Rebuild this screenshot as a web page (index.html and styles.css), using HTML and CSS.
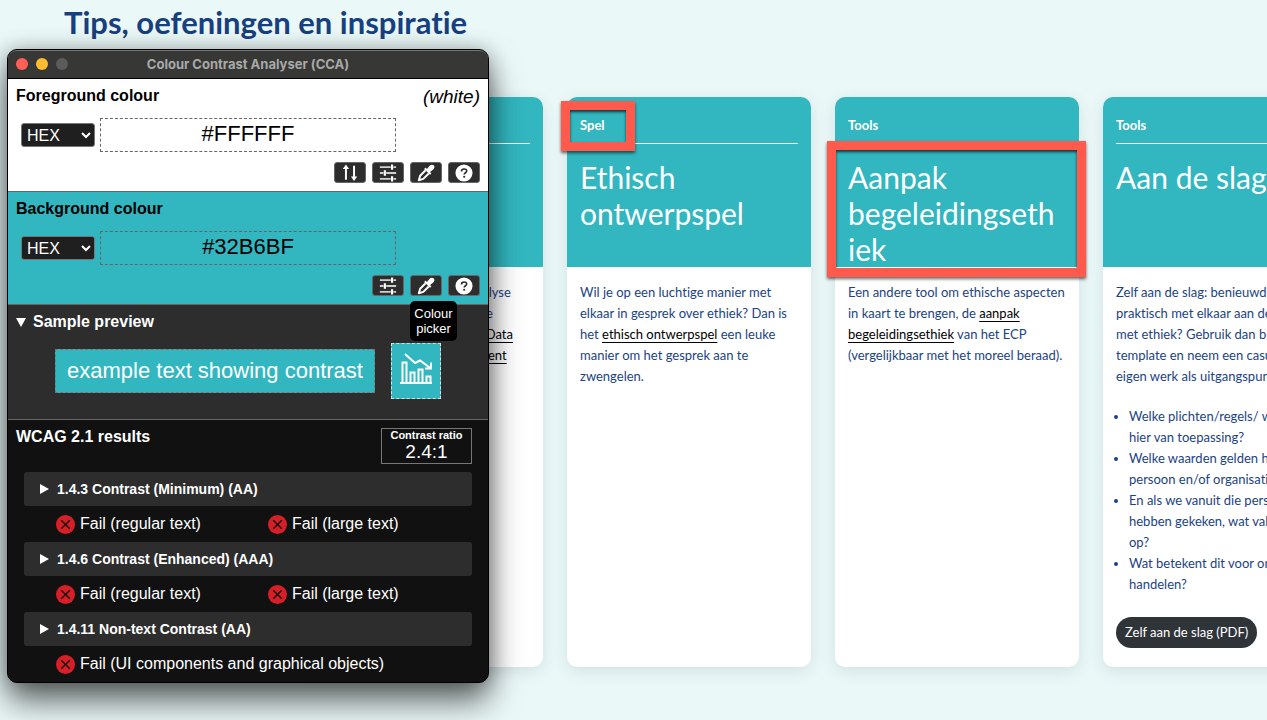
FILE: index.html
```html
<!DOCTYPE html>
<html lang="nl">
<head>
    <meta charset="UTF-8">
    <meta name="viewport" content="width=device-width, initial-scale=1.0">
    <title>Tips, oefeningen en inspiratie</title>
    <link rel="stylesheet" href="styles.css">
</head>

<body>
    <!-- Icons used more than once -->
    <svg class="sprite" aria-hidden="true">
        <symbol id="icon-swap" viewBox="0 0 20 20">
            <path d="M5.500 17.500V4M14.500 2v13" stroke="#fff" stroke-width="2.200" fill="none"/>
            <path d="M5.500 .5l3.500 5h-7zM14.500 19l-3.500-5h7z" fill="#fff"/>
        </symbol>
        <symbol id="icon-sliders" viewBox="0 0 20 20">
            <path d="M1 3.500h12M16 3.500h3M1 10h4M8 10h11M1 16.500h12M16 16.500h3" stroke="#d0d0d0" stroke-width="2" fill="none"/>
            <path d="M14.500 .5v6M6.500 7v6M14.500 13.500v6" stroke="#fff" stroke-width="2.400" fill="none"/>
        </symbol>
        <symbol id="icon-picker" viewBox="0 0 20 20">
            <path d="M9.500 7L3.500 13L2 18l5-1.500L13 10.500" stroke="#fff" stroke-width="2.200" fill="none" stroke-linejoin="round"/>
            <path d="M8 5.500L9.500 4l1.500 1.500L14 2c1.500-1.700 3.500-1.600 4.600-.5s1.200 3.100-.5 4.600L14.500 9L16 10.500l-1.500 1.500z" fill="#fff"/>
        </symbol>
        <symbol id="icon-help" viewBox="0 0 20 20">
            <circle cx="10" cy="10" r="9.500" fill="#fff"/>
            <path d="M7.200 8.200c0-3.600 5.800-3.500 5.800-.4 0 1.900-2.800 2-2.800 4" stroke="#2d2d2d" stroke-width="1.800" fill="none"/>
            <circle cx="10.200" cy="14.200" r="1.200" fill="#2d2d2d"/>
        </symbol>
        <symbol id="icon-fail" viewBox="0 0 20 20">
            <circle cx="10" cy="10" r="10" fill="#d61f26"/>
            <path d="M5.500 5.500l9 9M14.500 5.500l-9 9" stroke="#111" stroke-width="1.500" fill="none"/>
        </symbol>
    </svg>

    <main>
        <h1>Tips, oefeningen en inspiratie</h1>

        <div class="cards">
            <article class="card">
                <header class="card-header">
                    <p class="category">Tools</p>
                    <h2>DEDA</h2>
                </header>
                <div class="card-body">
                    <p>Maak in een workshop een analyse<br>
                    en bespreek met elkaar of je die<br>
                    vragen beantwoordt: <a href="#">Ethische Data</a><br>
                    <a href="#">Assistent, handleiding en assistent</a></p>
                </div>
            </article>

            <article class="card">
                <header class="card-header">
                    <p class="category">Spel</p>
                    <h2>Ethisch ontwerpspel</h2>
                </header>
                <div class="card-body">
                    <p>Wil je op een luchtige manier met<br>
                    elkaar in gesprek over ethiek? Dan is<br>
                    het <a href="#">ethisch ontwerpspel</a> een leuke<br>
                    manier om het gesprek aan te<br>
                    zwengelen.</p>
                </div>
                <div class="mark mark-category"></div>
            </article>

            <article class="card">
                <header class="card-header">
                    <p class="category">Tools</p>
                    <h2>Aanpak begeleidingseth<wbr>iek</h2>
                </header>
                <div class="card-body">
                    <p>Een andere tool om ethische aspecten<br>
                    in kaart te brengen, de <a href="#">aanpak<br>
                    begeleidingsethiek</a> van het ECP<br>
                    (vergelijkbaar met het moreel beraad).</p>
                </div>
                <div class="mark mark-title"></div>
            </article>

            <article class="card">
                <header class="card-header">
                    <p class="category">Tools</p>
                    <h2>Aan de slag</h2>
                </header>
                <div class="card-body">
                    <p>Zelf aan de slag: benieuwd hoe je<br>
                    praktisch met elkaar aan de gang<br>
                    met ethiek? Gebruik dan bijgaand<br>
                    template en neem een casus uit<br>
                    eigen werk als uitgangspunt.</p>
                    <ul>
                        <li>Welke plichten/regels/ wetten<br>hier van toepassing?</li>
                        <li>Welke waarden gelden hier<br>persoon en/of organisatie?</li>
                        <li>En als we vanuit die personen<br>hebben gekeken, wat valt<br>op?</li>
                        <li>Wat betekent dit voor ons<br>handelen?</li>
                    </ul>
                    <a class="download" href="#">Zelf aan de slag (PDF)</a>
                </div>
            </article>
        </div>
    </main>

    <section class="analyser" lang="en">
        <header class="titlebar">
            <span class="lights">
                <i class="light close"></i>
                <i class="light minimise"></i>
                <i class="light zoom"></i>
            </span>
            <span class="title">Colour Contrast Analyser (CCA)</span>
        </header>

        <div class="colour foreground">
            <div class="colour-header">
                <label class="heading" for="fg-value">Foreground colour</label>
                <em>(white)</em>
            </div>
            <div class="colour-value">
                <select aria-label="Foreground format">
                    <option>HEX</option>
                    <option>RGB</option>
                    <option>HSL</option>
                </select>
                <input id="fg-value" type="text" value="#FFFFFF">
            </div>
            <div class="tools">
                <button type="button" aria-label="Switch colours"><svg><use href="#icon-swap"/></svg></button>
                <button type="button" aria-label="Colour sliders"><svg><use href="#icon-sliders"/></svg></button>
                <button type="button" aria-label="Colour picker"><svg><use href="#icon-picker"/></svg></button>
                <button type="button" aria-label="Help"><svg><use href="#icon-help"/></svg></button>
            </div>
        </div>

        <div class="colour background">
            <div class="colour-header">
                <label class="heading" for="bg-value">Background colour</label>
            </div>
            <div class="colour-value">
                <select aria-label="Background format">
                    <option>HEX</option>
                    <option>RGB</option>
                    <option>HSL</option>
                </select>
                <input id="bg-value" type="text" value="#32B6BF">
            </div>
            <div class="tools">
                <button type="button" aria-label="Colour sliders"><svg><use href="#icon-sliders"/></svg></button>
                <button type="button" aria-describedby="picker-tip" aria-label="Colour picker">
                    <svg><use href="#icon-picker"/></svg>
                    <span class="tooltip" id="picker-tip" role="tooltip">Colour picker</span>
                </button>
                <button type="button" aria-label="Help"><svg><use href="#icon-help"/></svg></button>
            </div>
        </div>

        <details class="preview" open>
            <summary class="heading">Sample preview</summary>
            <div class="samples">
                <div class="sample-text">example text showing contrast</div>
                <div class="sample-icon">
                    <svg viewBox="0 0 32 32" fill="none" stroke="#fff" stroke-width="2">
                        <path d="M0 31h32M2.500 30V10.500h4V30M10.500 30V20.500h4V30M18.500 30V17.500h4V30M26.500 30v-5.500h4V30"/>
                        <path d="M5 2l10 9 5-2.500 11 8M31 10.500v6h-6"/>
                    </svg>
                </div>
            </div>
        </details>

        <div class="results">
            <div class="results-header">
                <h2 class="heading">WCAG 2.1 results</h2>
                <div class="ratio">
                    <strong>Contrast ratio</strong>
                    <span>2.4:1</span>
                </div>
            </div>

            <details><summary>1.4.3 Contrast (Minimum) (AA)</summary></details>
            <div class="outcome">
                <span><svg><use href="#icon-fail"/></svg>Fail (regular text)</span>
                <span><svg><use href="#icon-fail"/></svg>Fail (large text)</span>
            </div>

            <details><summary>1.4.6 Contrast (Enhanced) (AAA)</summary></details>
            <div class="outcome">
                <span><svg><use href="#icon-fail"/></svg>Fail (regular text)</span>
                <span><svg><use href="#icon-fail"/></svg>Fail (large text)</span>
            </div>

            <details><summary>1.4.11 Non-text Contrast (AA)</summary></details>
            <div class="outcome">
                <span><svg><use href="#icon-fail"/></svg>Fail (UI components and graphical objects)</span>
            </div>
        </div>
    </section>
</body>
</html>
```

FILE: styles.css
```css
* {
    box-sizing: border-box;
}

body {
    font-family: Lato, "Open Sans", sans-serif;
    font-size: 13px;
    line-height: 21px;
    font-variant-ligatures: none;
    margin: 0;
    min-height: 100vh;
    position: relative;
    overflow: hidden;
    background-color: #ebf8f8;
    color: #1b4384;
}

.sprite {
    display: none;
}

h1,
h2,
p,
ul {
    margin: 0;
}

h1 {
    padding: 4px 64px 0;
    font-size: 31px;
    line-height: 36px;
    color: #17407f;
}

/* Card strip, runs on past the right edge */
.cards {
    display: flex;
    gap: 24px;
    padding: 57px 0 53px 299px;
    overflow: hidden;
}

.card {
    flex: 0 0 244px;
    position: relative;
    background: #fff;
    border-radius: 10px;
    box-shadow: 0 4px 16px rgba(0, 60, 70, 0.12);
}

.card-header {
    min-height: 170px;
    padding: 18px 13px 0;
    background: #32b6bf;
    border-radius: 10px 10px 0 0;
    color: #fff;
}

.category {
    padding-bottom: 7px;
    border-bottom: 1px solid #fff;
    font-weight: bold;
}

.card-header h2 {
    margin-top: 15px;
    font-size: 30px;
    line-height: 36px;
    font-weight: normal;
}

.card-body {
    padding: 15px 13px 19px;
    white-space: nowrap;
}

.card-body a {
    color: #000;
    text-underline-offset: 3px;
}

.card-body ul {
    margin: 19px 0 22px;
    padding-left: 13px;
}

.card-body .download {
    display: inline-block;
    padding: 5px 9px;
    border-radius: 16px;
    background: #2f3439;
    color: #fff;
    text-decoration: none;
}

/* Red marker frames */
.mark {
    position: absolute;
    border: 9px solid #ff5a4b;
    box-shadow: 0 2px 3px rgba(0, 0, 0, 0.6), inset 0 2px 3px rgba(0, 0, 0, 0.7);
}

.mark-category {
    top: 4px;
    left: -6px;
    width: 74px;
    height: 50px;
}

.mark-title {
    top: 44px;
    left: -8px;
    width: 259px;
    height: 136px;
}

/* Floating analyser window */
.analyser {
    position: absolute;
    top: 49px;
    left: 7px;
    width: 482px;
    border: 1px solid #000;
    border-radius: 10px;
    background: #111;
    box-shadow: 0 18px 32px rgba(0, 0, 0, 0.6), 0 0 20px rgba(0, 0, 0, 0.25);
    font-family: "Liberation Sans", Arial, sans-serif;
    font-size: 16px;
    line-height: 18px;
    color: #fff;
}

.titlebar {
    display: flex;
    align-items: center;
    height: 29px;
    padding: 0 8px 2px;
    border-top: 1px solid #777;
    border-bottom: 1px solid #000;
    border-radius: 9px 9px 0 0;
    background: #373735;
}

.lights {
    flex: 1;
    display: flex;
    gap: 8px;
}

.light {
    width: 12px;
    height: 12px;
    border-radius: 50%;
}

.close {
    background: #ff5f57;
}

.minimise {
    background: #febc2e;
}

.zoom {
    background: #5b5b5b;
}

.title {
    font-family: Inter, sans-serif;
    font-size: 13px;
    font-weight: bold;
    color: #a9a9a8;
}

.titlebar::after {
    content: "";
    flex: 1;
}

.heading {
    font-size: 16px;
    line-height: 20px;
    font-weight: bold;
}

.colour {
    padding: 7px 8px 8px;
    border-bottom: 1px solid #666;
    color: #000;
}

.foreground {
    background: #fff;
}

.background {
    background: #32b6bf;
}

.colour-header {
    display: flex;
    justify-content: space-between;
    height: 22px;
}

.colour-header em {
    font-size: 19px;
    line-height: 22px;
}

.colour-value {
    display: flex;
    align-items: center;
    gap: 5px;
    margin: 10px 0;
    padding-left: 5px;
}

.colour-value select {
    width: 74px;
    height: 24px;
    padding: 0 0 0 1px;
    border: 1px solid #777;
    border-radius: 3px;
    background: #1f1f1f;
    color: #fff;
    font: inherit;
}

.colour-value input {
    width: 296px;
    height: 34px;
    padding: 0 0 3px;
    border: 1px dashed #666;
    background: none;
    font: inherit;
    font-size: 22px;
    text-align: center;
    color: #000;
}

.tools {
    display: flex;
    justify-content: flex-end;
    gap: 6px;
}

.tools button {
    position: relative;
    display: flex;
    align-items: center;
    justify-content: center;
    width: 32px;
    height: 21px;
    padding: 0;
    border: 1px solid #666;
    border-radius: 3px;
    background: #2d2d2d;
}

.tools svg {
    width: 18px;
    height: 18px;
}

.tooltip {
    position: absolute;
    top: 25px;
    left: -1px;
    width: 47px;
    padding: 5px 0;
    border-radius: 5px;
    background: #000;
    color: #fff;
    font: 13px/15px "Liberation Sans", Arial, sans-serif;
}

.preview {
    padding: 7px 8px 20px;
    border-bottom: 1px solid #666;
    background: #2d2d2d;
}

summary {
    display: flex;
    align-items: center;
    list-style: none;
}

summary::before {
    content: "";
    border-left: 9px solid #fff;
    border-top: 5px solid transparent;
    border-bottom: 5px solid transparent;
    margin-right: 8px;
}

.preview summary {
    width: fit-content;
}

.preview summary::before {
    border-top: 9px solid #fff;
    border-left: 5px solid transparent;
    border-right: 5px solid transparent;
    border-bottom: 0;
    margin-right: 7px;
}

.samples {
    display: flex;
    align-items: center;
    justify-content: center;
    gap: 16px;
    margin-top: 11px;
}

.sample-text {
    width: 320px;
    height: 44px;
    border: 1px dashed #777;
    background: #32b6bf;
    font-size: 22px;
    line-height: 42px;
    text-align: center;
    white-space: nowrap;
}

.sample-icon {
    width: 50px;
    height: 56px;
    padding: 8px;
    border: 1px dashed #ddd;
    background: #32b6bf;
}

.sample-icon svg {
    display: block;
    width: 32px;
    height: 32px;
}

.results {
    padding: 8px 16px 0;
}

.results-header {
    display: flex;
    justify-content: space-between;
    margin: 0 0 8px -8px;
}

.results-header .heading {
    line-height: 18px;
}

.ratio {
    display: flex;
    flex-direction: column;
    width: 91px;
    height: 36px;
    border: 1px solid #777;
    text-align: center;
}

.ratio strong {
    font-size: 11px;
    line-height: 13px;
}

.ratio span {
    font-size: 19px;
    line-height: 20px;
}

.results summary {
    height: 34px;
    padding-left: 16px;
    border-radius: 3px;
    background: #2d2d2d;
    font-size: 14px;
    font-weight: bold;
}

.outcome {
    display: flex;
    height: 36px;
    padding-left: 32px;
}

.outcome span {
    display: flex;
    align-items: center;
    gap: 5px;
    min-width: 212px;
}

.outcome svg {
    width: 19px;
    height: 19px;
}
```
